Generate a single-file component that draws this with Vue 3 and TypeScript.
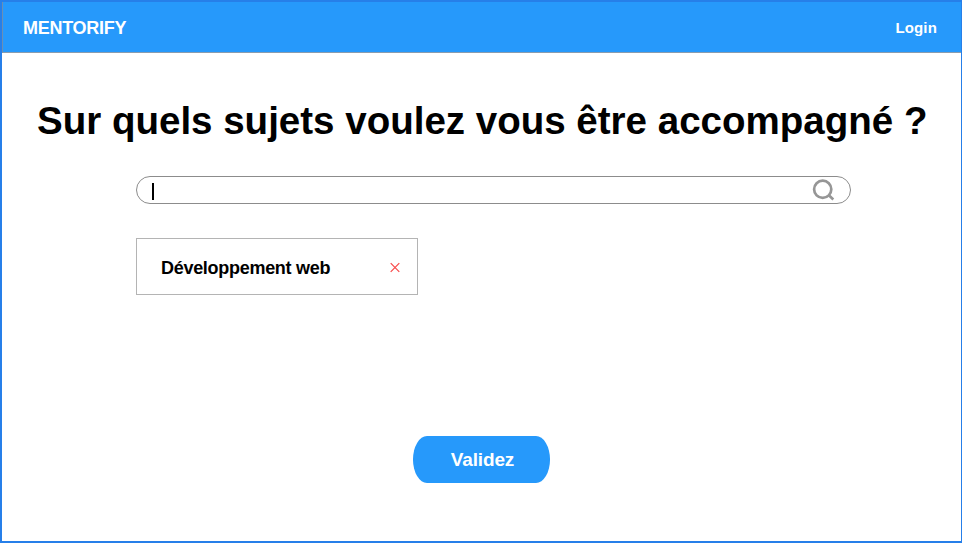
<script setup lang="ts">
import { ref } from 'vue'

const topics = ref<string[]>(['Développement web'])

function removeTopic(topic: string): void {
  topics.value = topics.value.filter((t) => t !== topic)
}
</script>

<template>
  <div class="page">
    <header class="bar">
      <span class="brand">MENTORIFY</span>
      <a class="login">Login</a>
    </header>
    <main class="content">
      <h1 class="title">Sur quels sujets voulez vous être accompagné ?</h1>
      <div class="search">
        <span class="caret"></span>
        <svg class="glass" width="24" height="24" viewBox="0 0 24 24">
          <circle cx="10.7" cy="11.3" r="8.6" />
          <path d="M16.6 17.1L21.3 21.4" />
        </svg>
      </div>
      <div class="topics">
        <div v-for="topic in topics" :key="topic" class="topic">
          <span class="name">{{ topic }}</span>
          <svg class="remove" width="10" height="10" viewBox="0 0 10 10" @click="removeTopic(topic)">
            <path d="M0.7 0.2L9.3 8.8M9.3 0.2L0.7 8.8" />
          </svg>
        </div>
      </div>
      <button class="submit" type="button">Validez</button>
    </main>
  </div>
</template>

<style>
body {
  margin: 0;
  background: #fff;
}
</style>

<style scoped>
.page {
  box-sizing: border-box;
  width: 962px;
  height: 543px;
  border: 2px solid #267fe9;
  border-right-width: 1px;
  display: flex;
  flex-direction: column;
  overflow: hidden;
  font-family: "Liberation Sans", Arial, sans-serif;
  font-weight: 700;
  color: #000;
}
.bar {
  box-sizing: border-box;
  height: 51px;
  flex: none;
  padding: 2px 24px 0 20px;
  display: flex;
  align-items: center;
  justify-content: space-between;
  background: #2699fb;
  border-bottom: 1px solid #8a9cae;
  border-left: 1px solid #6a8fb4;
  color: #fff;
}
.brand {
  font-size: 18px;
  line-height: 20px;
  letter-spacing: -0.28px;
}
.login {
  font-size: 15px;
  line-height: 18px;
  letter-spacing: 0.15px;
}
.content {
  flex: 1;
  display: flex;
  flex-direction: column;
  padding: 45px 0 0;
}
.title {
  margin: 0 0 0 35px;
  font-size: 38.53px;
  line-height: 46px;
  white-space: nowrap;
}
.search {
  box-sizing: border-box;
  width: 715px;
  height: 28px;
  margin: 32px 0 0 134px;
  padding: 0 14px 0 15px;
  border: 1px solid #8c8c8c;
  border-radius: 14px;
  display: flex;
  align-items: center;
  justify-content: space-between;
}
.caret {
  width: 2px;
  height: 17px;
  margin-top: 2px;
  background: #000;
}
.glass {
  fill: none;
  stroke: #969696;
  stroke-width: 2.7;
}
.topics {
  height: 57px;
  margin: 34px 0 0 134px;
  display: flex;
}
.topic {
  box-sizing: border-box;
  width: 282px;
  height: 57px;
  padding: 2px 17px 0 24px;
  border: 1px solid #b4b4b4;
  display: flex;
  align-items: center;
  justify-content: space-between;
}
.name {
  font-size: 18px;
  line-height: 20px;
  letter-spacing: -0.29px;
}
.remove {
  fill: none;
  stroke: #f84848;
  stroke-width: 1.2;
  overflow: visible;
}
.submit {
  width: 137px;
  height: 47px;
  margin: 141px 0 0 411px;
  padding: 0 0 0 2px;
  border: 0;
  border-radius: 14px / 23.5px;
  background: #2699fb;
  color: #fff;
  font: 700 19px/22px "Liberation Sans", Arial, sans-serif;
  letter-spacing: -0.15px;
}
</style>
